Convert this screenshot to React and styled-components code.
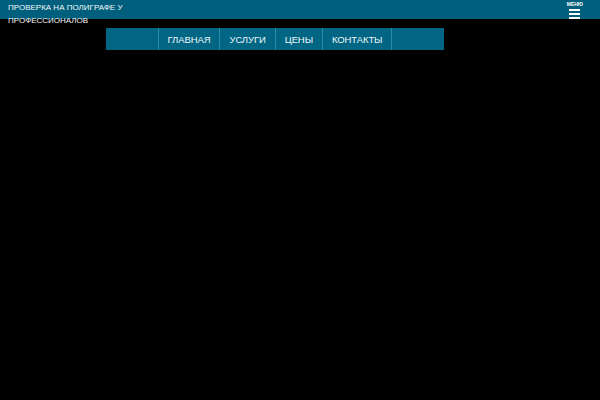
import React from 'react'
import styled, { createGlobalStyle } from 'styled-components'

const GlobalStyle = createGlobalStyle`
  html, body {
    margin: 0;
    padding: 0;
    background: #000;
    font-family: "Liberation Sans", Arial, sans-serif;
  }
`;

const items = ['ГЛАВНАЯ', 'УСЛУГИ', 'ЦЕНЫ', 'КОНТАКТЫ'];

export default function App() {
  return (
    <Page>
      <GlobalStyle />
      <TopBar>
        <Slogan>ПРОВЕРКА НА ПОЛИГРАФЕ У<br />ПРОФЕССИОНАЛОВ</Slogan>
        <MenuToggle>
          <MenuLabel>МЕНЮ</MenuLabel>
          <Burger>
            <span />
            <span />
            <span />
          </Burger>
        </MenuToggle>
      </TopBar>
      <Nav>
        <NavList>
          {items.map((item, i) => (
            <NavItem key={item} last={i === items.length - 1}>{item}</NavItem>
          ))}
        </NavList>
      </Nav>
    </Page>
  )
}

const Page = styled.div`
  width: 600px;
  height: 400px;
  background: #000;
  overflow: hidden;
`;

const TopBar = styled.div`
  height: 19px;
  background-color: #005f7d;
  display: flex;
  justify-content: space-between;
  align-items: flex-start;
  padding: 0 17px 0 8px;
`;

const Slogan = styled.div`
  font-size: 8px;
  line-height: 13px;
  padding-top: 1px;
  color: #f2f7fa;
  white-space: nowrap;
`;

const MenuToggle = styled.div`
  display: flex;
  flex-direction: column;
  align-items: center;
  padding-top: 1px;
`;

const MenuLabel = styled.div`
  font-size: 5px;
  font-weight: 700;
  line-height: 6px;
  color: #fff;
`;

const Burger = styled.div`
  display: flex;
  flex-direction: column;
  gap: 2px;
  margin-top: 2px;
  span {
    display: block;
    width: 11px;
    height: 2px;
    background: #fff;
  }
`;

const Nav = styled.nav`
  width: 338px;
  height: 22px;
  margin: 9px 0 0 106px;
  background-color: #006684;
  display: flex;
  justify-content: center;
`;

const NavList = styled.ul`
  display: flex;
  margin: 0;
  padding: 0;
  list-style: none;
`;

const NavItem = styled.li`
  display: flex;
  align-items: center;
  padding: 0 9px;
  font-size: 9.5px;
  letter-spacing: -0.1px;
  color: #f0f6f9;
  border-left: 1px solid #2f8aa5;
  border-right: ${p => (p.last ? '1px solid #2f8aa5' : 'none')};
`;
